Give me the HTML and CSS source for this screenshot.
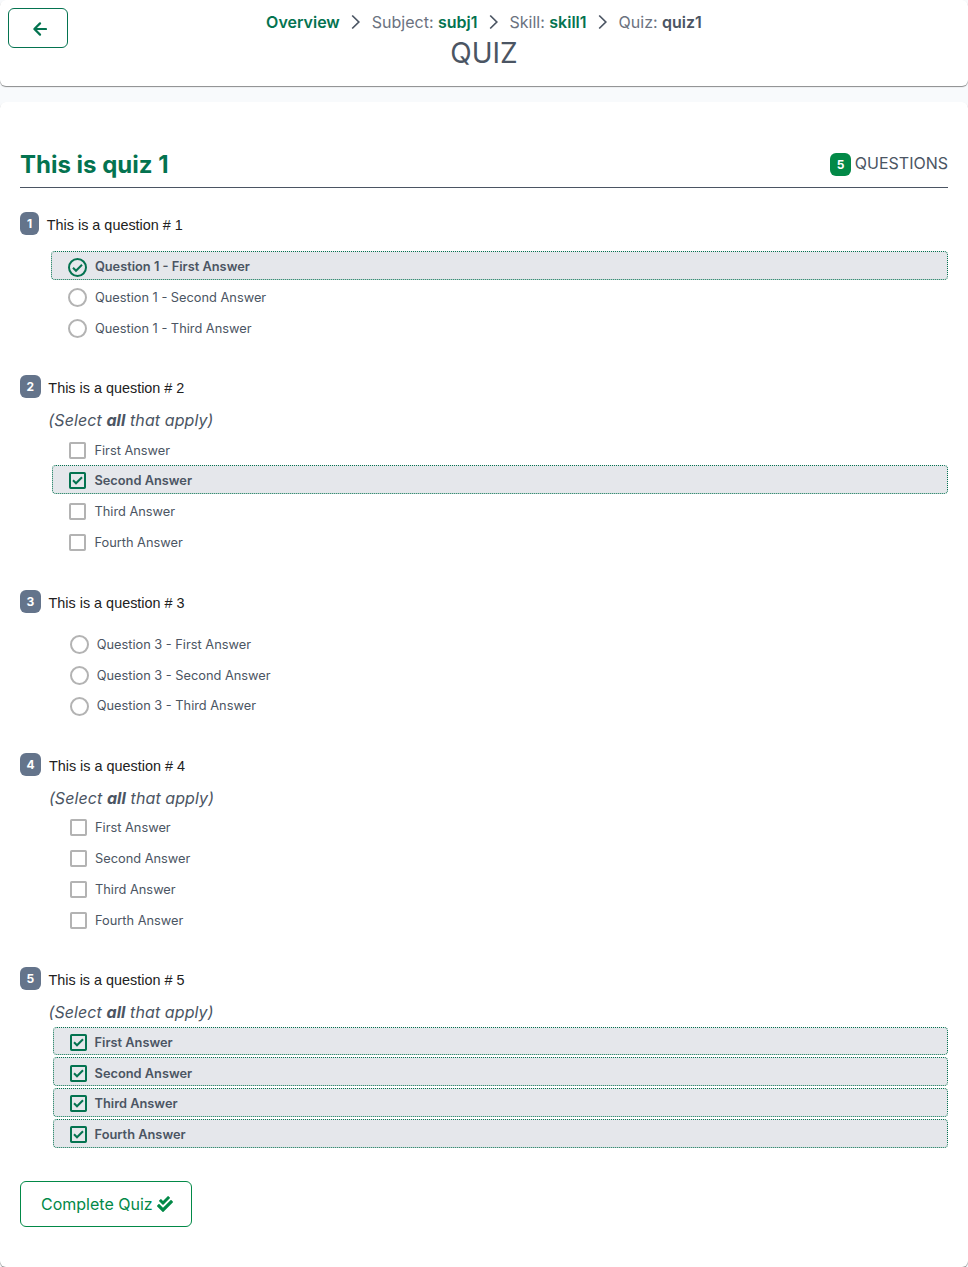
FILE: index.html
```
<!DOCTYPE html>
<html lang="en">
<head>
<meta charset="utf-8">
<title>Quiz</title>
<link rel="stylesheet" href="styles.css">
</head>
<body>
<header class="page-header">
  <button class="back" aria-label="Back"><svg width="14" height="14" viewBox="0 0 14 14"><path d="M13 7H2M7 1.4 1.4 7 7 12.6"/></svg></button>
  <div class="heading">
    <nav class="crumbs">
      <a>Overview</a>
      <svg class="chevron" width="10" height="16" viewBox="0 0 10 16"><path d="M1.2 1.5 7.8 8 1.2 14.5"/></svg>
      <span>Subject: <a>subj1</a></span>
      <svg class="chevron" width="10" height="16" viewBox="0 0 10 16"><path d="M1.2 1.5 7.8 8 1.2 14.5"/></svg>
      <span>Skill: <a>skill1</a></span>
      <svg class="chevron" width="10" height="16" viewBox="0 0 10 16"><path d="M1.2 1.5 7.8 8 1.2 14.5"/></svg>
      <span>Quiz: <b>quiz1</b></span>
    </nav>
    <h1>QUIZ</h1>
  </div>
</header>
<main class="card">
  <div class="quiz-head">
    <h2>This is quiz 1</h2>
    <div class="count"><span class="badge green">5</span><span>QUESTIONS</span></div>
  </div>
  <div id="questions"></div>
  <button class="complete"><span>Complete Quiz</span><svg width="16" height="16" viewBox="0 0 512 512"><path d="M505 174.8l-39.6-39.6c-9.4-9.4-24.6-9.4-33.9 0L192 374.7 80.6 263.2c-9.4-9.4-24.6-9.4-33.9 0L7 302.9c-9.4 9.4-9.4 24.6 0 34L175 505c9.4 9.4 24.6 9.4 33.9 0l296-296.2c9.4-9.5 9.4-24.7.1-34zm-324.3 106c6.2 6.3 16.4 6.3 22.6 0l208-208.2c6.2-6.3 6.2-16.4 0-22.6L366.1 4.7c-6.2-6.3-16.4-6.3-22.6 0L192 156.2l-55.4-55.5c-6.2-6.3-16.4-6.3-22.6 0L68.7 146c-6.2 6.3-6.2 16.4 0 22.6l112 112.2z"/></svg></button>
</main>
<script src="quiz.js"></script>
</body>
</html>
```
FILE: styles.css
```
* { box-sizing: border-box; }
body { margin: 0; background: #f8fafc; color: #4b5563; font: 16px/24px Inter, sans-serif; }
h1, h2 { margin: 0; }
button { font: inherit; background: #fff; border-radius: 6px; }
.page-header { display: grid; grid-template-columns: 60px 1fr 60px; height: 86px; padding: 8px; background: #fff; border-radius: 6px; box-shadow: 0 1px 1px rgba(0,0,0,.45); }
.back { width: 60px; height: 40px; padding: 2px 0 0 4px; border: 1px solid #047350; display: flex; align-items: center; justify-content: center; }
.back path { fill: none; stroke: #047350; stroke-width: 2.2; stroke-linecap: round; stroke-linejoin: round; }
.heading { display: flex; flex-direction: column; align-items: center; padding-top: 2px; }
.crumbs { display: flex; align-items: center; gap: 11px; color: #6b7280; white-space: nowrap; }
.crumbs a { color: #047350; font-weight: 600; }
.crumbs b { color: #4b5563; font-weight: 600; }
.chevron path { fill: none; stroke: #4b5563; stroke-width: 1.7; }
h1 { font-size: 28px; line-height: 38px; font-weight: 400; }
.card { margin-top: 16px; height: 1165px; padding: 42px 20px 0; background: #fff; border-radius: 6px; box-shadow: 0 1px 1px rgba(0,0,0,.45); }
.quiz-head { display: flex; justify-content: space-between; height: 44px; border-bottom: 1px solid #4b5563; margin-bottom: 24px; }
h2 { font-size: 24px; line-height: 42px; font-weight: 700; color: #047350; }
.count { display: flex; gap: 4px; padding-top: 7px; }
.badge { flex: none; height: 23px; min-width: 19px; padding: 0 6.5px; border-radius: 6px; background: #64748b; color: #fff; font-size: 12px; font-weight: 700; line-height: 23px; text-align: center; }
.count .badge { margin-top: 2px; }
.green { background: #028947; }
.question { display: flex; gap: 7.8px; height: 163px; }
.question.multi { height: 214.6px; }
.question:last-child { height: 213.8px; }
.body { flex: 1; }
.text { font: 14.4px/26px "Liberation Sans", Arial, sans-serif; color: #212121; height: 38px; }
.multi .text { height: 33px; }
.hint { font-style: italic; letter-spacing: .09px; line-height: 24px; height: 25.4px; }
.hint b { font-weight: 700; }
.answers { display: flex; flex-direction: column; margin-left: 4.1px; }
.answer { display: flex; align-items: center; gap: 8px; height: 28.8px; margin: 1px 0; padding: 3.5px 16px 0; border: 1px dotted transparent; border-radius: 4px; font-size: 12.8px; }
.answer svg { flex: none; fill: none; stroke: #b3b3b3; stroke-width: 2; }
.answer.selected { background: #e5e7eb; border-color: #047350; font-weight: 600; }
.selected svg { stroke: #047350; }
.complete { display: flex; align-items: center; gap: 4px; width: 172px; height: 46px; padding: 0 20px; color: #028947; border: 1px solid #028947; white-space: nowrap; }
.complete svg { flex: none; margin-top: 1px; fill: #028947; }
```
FILE: quiz.js
```
const ordinals = ['First', 'Second', 'Third', 'Fourth'];
const questions = [
  { multi: false, selected: [0] },
  { multi: true, selected: [1] },
  { multi: false, selected: [] },
  { multi: true, selected: [] },
  { multi: true, selected: [0, 1, 2, 3] }
];

function icon(multi, on) {
  return multi
    ? `<svg width="17" height="18" viewBox="0 0 17 18"><rect x="1" y="1" width="15" height="15" rx=".7"/>${on ? '<path d="m4 8.3 3 3 6-6"/>' : ''}</svg>`
    : `<svg width="19" height="19" viewBox="0 0 19 19"><circle cx="9.5" cy="9.5" r="8.5"/>${on ? '<path d="m5 9.8 3 3 6-6"/>' : ''}</svg>`;
}

document.getElementById('questions').innerHTML = questions.map((q, i) => {
  const n = i + 1;
  const names = q.multi ? ordinals : ordinals.slice(0, 3);
  const answers = names.map((name, j) => {
    const on = q.selected.includes(j);
    return `<div class="answer${on ? ' selected' : ''}">${icon(q.multi, on)}<span>${q.multi ? '' : `Question ${n} - `}${name} Answer</span></div>`;
  }).join('');
  return `<section class="question${q.multi ? ' multi' : ''}"><span class="badge">${n}</span><div class="body"><div class="text">This is a question # ${n}</div>${q.multi ? '<div class="hint">(Select <b>all</b> that apply)</div>' : ''}<div class="answers">${answers}</div></div></section>`;
}).join('');
```
